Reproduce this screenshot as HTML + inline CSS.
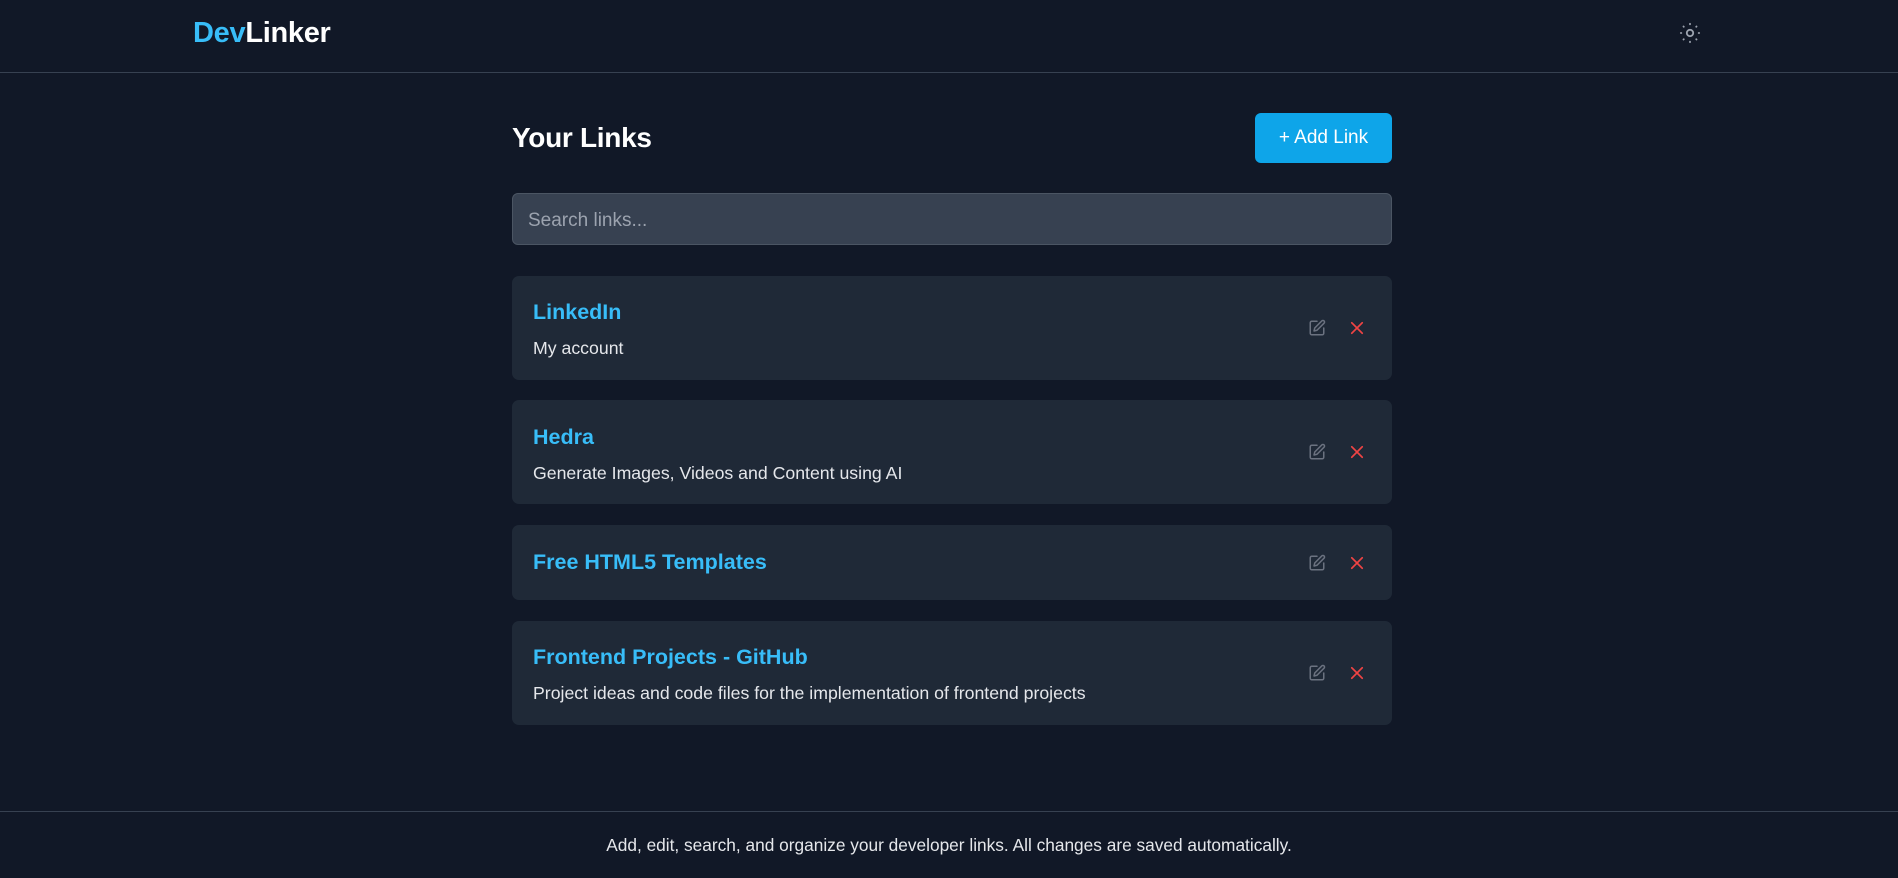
<!DOCTYPE html>
<html><head><meta charset="utf-8"><style>
*{box-sizing:border-box;margin:0;padding:0}
body{width:1898px;height:871px;background:#111827;font-family:"Liberation Sans",sans-serif;color:#e5e7eb;position:relative;overflow:hidden}
.hdr{position:absolute;left:0;top:0;width:1898px;height:73px;border-bottom:1px solid #374151}
.logo{position:absolute;left:193px;top:17px;font-size:29px;font-weight:bold;color:#fff;letter-spacing:-0.3px}
.logo span{color:#38bdf8}
.sun{position:absolute;left:1679px;top:22px}
h1{position:absolute;left:512px;top:122px;font-size:28px;font-weight:bold;color:#fff;letter-spacing:-0.3px}
.btn{position:absolute;left:1255px;top:113px;width:137px;height:50px;background:#0ea5e9;border-radius:6px;color:#fff;font-size:19px;text-align:center;line-height:50px}
.search{position:absolute;left:512px;top:193px;width:880px;height:52px;background:#374151;border:1px solid #4b5563;border-radius:6px;padding-left:15px;line-height:54px;font-size:19px;color:#9ca3af}
.card{position:absolute;left:512px;width:880px;background:#1f2937;border-radius:7px}
.t{position:absolute;left:21px;font-size:21.5px;font-weight:bold;color:#38bdf8}
.d{position:absolute;left:21px;font-size:17.7px;color:#e5e7eb}
.ic{position:absolute;top:50%;margin-top:-9px}
.foot{position:absolute;left:0;top:811px;width:1898px;height:60px;border-top:1px solid #374151;text-align:center;font-size:17.3px;color:#e5e7eb;line-height:66px}
</style></head><body>
<div class="hdr"><div class="logo"><span>Dev</span>Linker</div>
<svg class="sun" width="22" height="22" viewBox="0 0 24 24" fill="none" stroke="#9ca3af" stroke-width="2" stroke-linecap="round"><circle cx="12" cy="12" r="3.5"/><path d="M12 2v.5M12 21.5v.5M4.9 4.9l.3.3M18.8 18.8l.3.3M2 12h.5M21.5 12h.5M4.9 19.1l.3-.3M18.8 5.2l.3-.3"/></svg></div>
<h1>Your Links</h1>
<div class="btn">+ Add Link</div>
<div class="search">Search links...</div>

<div class="card" style="top:276px;height:104px"><div class="t" style="top:24px">LinkedIn</div><div class="d" style="top:62px">My account</div>
<svg class="ic" style="left:796px" width="18" height="18" viewBox="0 0 24 24" fill="none" stroke="#6b7280" stroke-width="2" stroke-linecap="round" stroke-linejoin="round"><path d="M12 3H5a2 2 0 0 0-2 2v14a2 2 0 0 0 2 2h14a2 2 0 0 0 2-2v-7"/><path d="M18.4 2.6a2.1 2.1 0 0 1 3 3L12 15l-4 1 1-4z"/></svg>
<svg class="ic" style="left:836px" width="18" height="18" viewBox="0 0 24 24" fill="none" stroke="#ef4444" stroke-width="2.2" stroke-linecap="round"><path d="M5 5l14 14M19 5L5 19"/></svg></div>

<div class="card" style="top:400px;height:104px"><div class="t" style="top:25px">Hedra</div><div class="d" style="top:63px">Generate Images, Videos and Content using AI</div>
<svg class="ic" style="left:796px" width="18" height="18" viewBox="0 0 24 24" fill="none" stroke="#6b7280" stroke-width="2" stroke-linecap="round" stroke-linejoin="round"><path d="M12 3H5a2 2 0 0 0-2 2v14a2 2 0 0 0 2 2h14a2 2 0 0 0 2-2v-7"/><path d="M18.4 2.6a2.1 2.1 0 0 1 3 3L12 15l-4 1 1-4z"/></svg>
<svg class="ic" style="left:836px" width="18" height="18" viewBox="0 0 24 24" fill="none" stroke="#ef4444" stroke-width="2.2" stroke-linecap="round"><path d="M5 5l14 14M19 5L5 19"/></svg></div>

<div class="card" style="top:525px;height:75px"><div class="t" style="top:25px">Free HTML5 Templates</div>
<svg class="ic" style="left:796px" width="18" height="18" viewBox="0 0 24 24" fill="none" stroke="#6b7280" stroke-width="2" stroke-linecap="round" stroke-linejoin="round"><path d="M12 3H5a2 2 0 0 0-2 2v14a2 2 0 0 0 2 2h14a2 2 0 0 0 2-2v-7"/><path d="M18.4 2.6a2.1 2.1 0 0 1 3 3L12 15l-4 1 1-4z"/></svg>
<svg class="ic" style="left:836px" width="18" height="18" viewBox="0 0 24 24" fill="none" stroke="#ef4444" stroke-width="2.2" stroke-linecap="round"><path d="M5 5l14 14M19 5L5 19"/></svg></div>

<div class="card" style="top:621px;height:104px"><div class="t" style="top:24px">Frontend Projects - GitHub</div><div class="d" style="top:62px">Project ideas and code files for the implementation of frontend projects</div>
<svg class="ic" style="left:796px" width="18" height="18" viewBox="0 0 24 24" fill="none" stroke="#6b7280" stroke-width="2" stroke-linecap="round" stroke-linejoin="round"><path d="M12 3H5a2 2 0 0 0-2 2v14a2 2 0 0 0 2 2h14a2 2 0 0 0 2-2v-7"/><path d="M18.4 2.6a2.1 2.1 0 0 1 3 3L12 15l-4 1 1-4z"/></svg>
<svg class="ic" style="left:836px" width="18" height="18" viewBox="0 0 24 24" fill="none" stroke="#ef4444" stroke-width="2.2" stroke-linecap="round"><path d="M5 5l14 14M19 5L5 19"/></svg></div>

<div class="foot">Add, edit, search, and organize your developer links. All changes are saved automatically.</div>
</body></html>
